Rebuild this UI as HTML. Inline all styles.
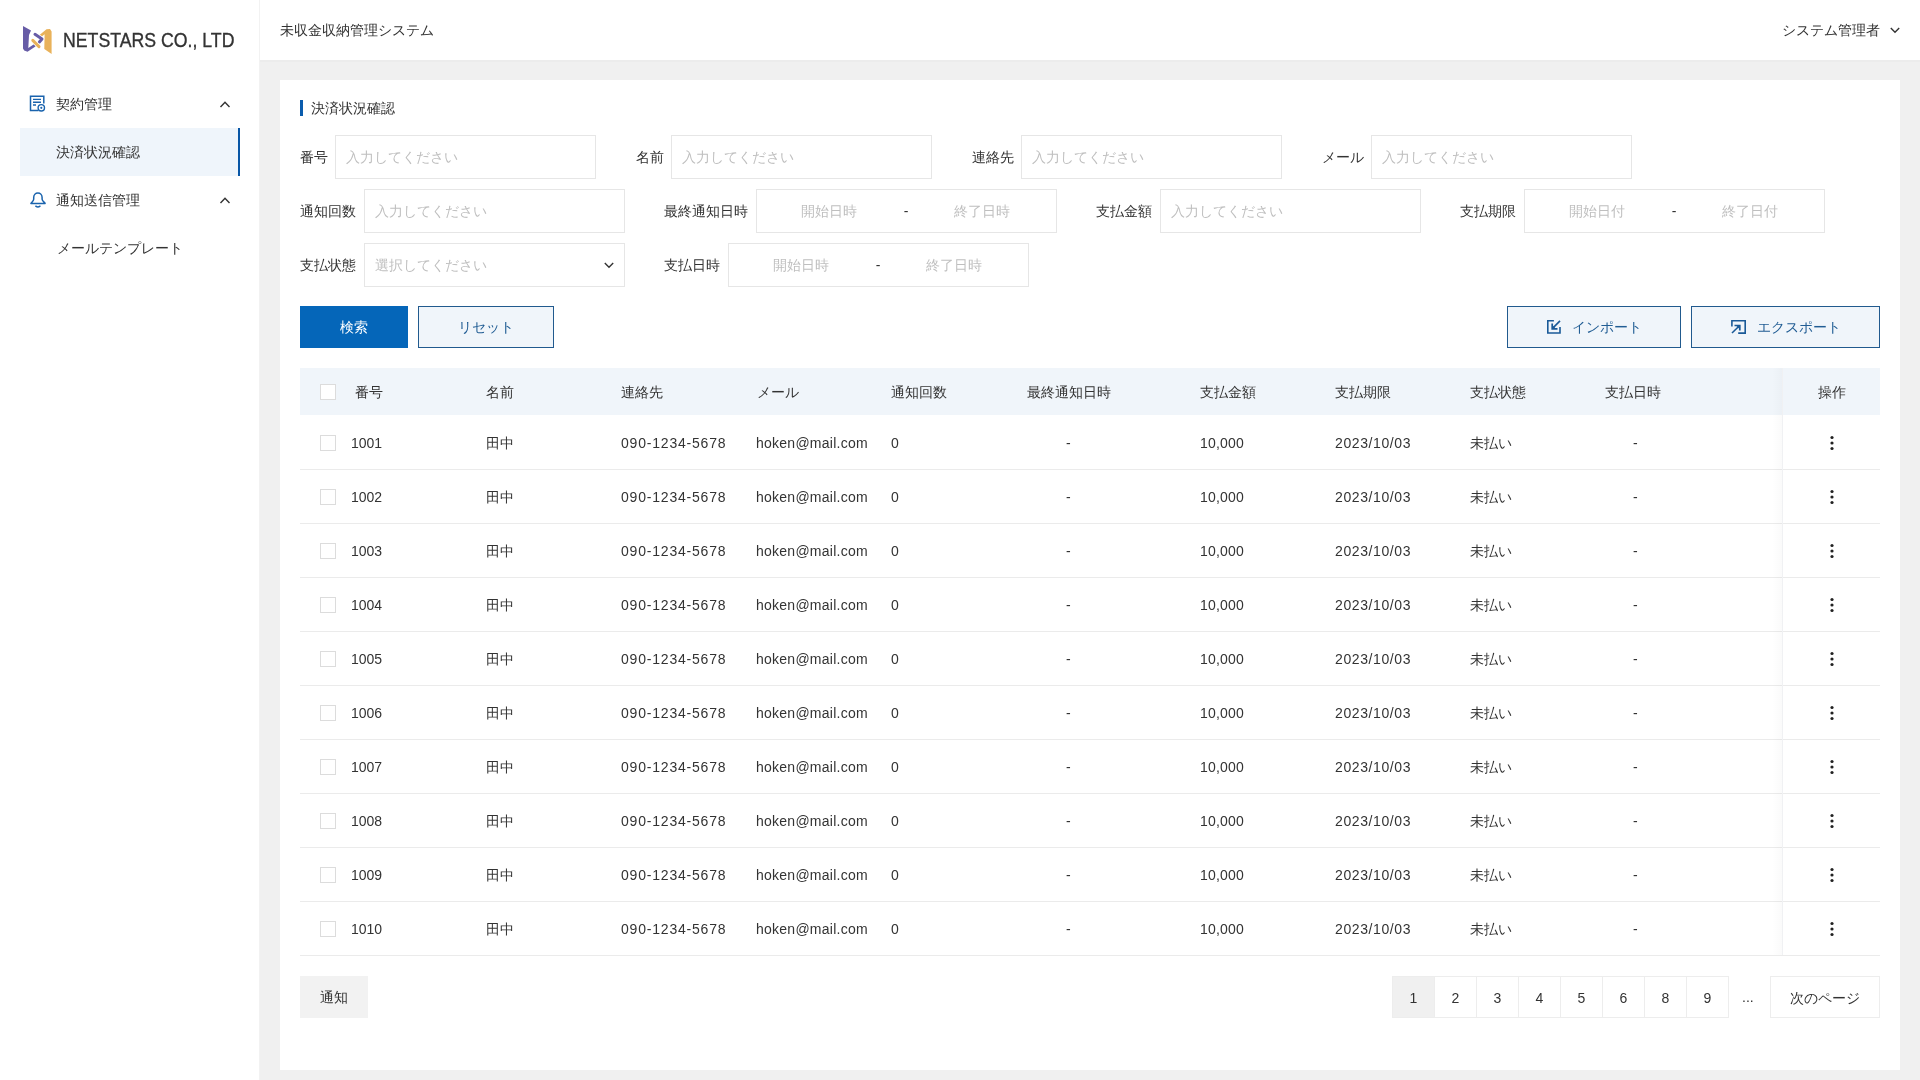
<!DOCTYPE html>
<html lang="ja"><head><meta charset="utf-8"><title>未収金収納管理システム</title>
<style>
html,body{margin:0;padding:0}
body{width:1920px;height:1080px;overflow:hidden;position:relative;background:#f0f0f0;font-family:"Liberation Sans",sans-serif;font-size:14px;color:#333333}
#wrap{position:absolute;left:0;top:0;width:1920px;height:1080px;will-change:transform}
.abs{position:absolute}
.t,.m,.ph{white-space:nowrap;line-height:20px;height:20px}
.ph{color:#bfbfbf}
.c{text-align:center}
#side{position:absolute;left:0;top:0;width:259px;height:1080px;background:#fff;border-right:1px solid #f2f2f2}
#head{position:absolute;left:260px;top:0;width:1660px;height:60px;background:#fff}
#card{position:absolute;left:280px;top:80px;width:1620px;height:990px;background:#fff}
.logo{font-size:20px;line-height:28px;color:#333;-webkit-text-stroke:0.35px #333;white-space:nowrap;transform-origin:0 0;transform:scaleX(0.885)}
.box{height:44px;box-sizing:border-box;border:1px solid #e6e6e6;background:#fff}
.btn{height:42px;line-height:42px;text-align:center;box-sizing:border-box;white-space:nowrap}
.pri{background:#0566b9;color:#fff}
.sec{background:#f0f5fa;border:1px solid #215a8e;color:#215d94;line-height:40px}
.gray{background:#f2f2f2;color:#333}
.cb{width:14px;height:14px;border:1px solid #dcdcdc;background:#fff}
.pg{width:42px;height:42px;line-height:42px;text-align:center;box-sizing:border-box;border:1px solid #ededed}
</style></head><body><div id="wrap">
<div id="side"></div>
<svg class="abs" style="left:20px;top:22px" width="36" height="36" viewBox="0 0 36 36">
<path d="M18.6 13.8 L26.5 7.3 L30 7 L31.6 9.6 L31.6 32 L24.3 27 L24.6 12.3 L20.6 15.6 Z" fill="#e9b25a"/>
<path d="M15 12.3 L22 17 L19.4 20" fill="none" stroke="#fff" stroke-width="4.6" stroke-linecap="round" stroke-linejoin="round"/>
<path d="M15 12.3 L22 17 L19.4 20" fill="none" stroke="#675ca6" stroke-width="3" stroke-linecap="round" stroke-linejoin="round"/>
<path d="M3 4 L11 8.5 L9 13 L8.3 26 L14.3 22 L15.8 24.3 L7.5 29.8 L4.2 28.6 L3 26.5 Z" fill="#675ca6"/>
<path d="M12.8 18.4 L19 24.6" fill="none" stroke="#fff" stroke-width="4.4" stroke-linecap="round"/>
<path d="M12.8 18.4 L19 24.6" fill="none" stroke="#e9b25a" stroke-width="3" stroke-linecap="round"/>
</svg>
<div class="abs logo" style="left:63px;top:26px">NETSTARS CO., LTD</div>
<svg class="abs" style="left:28px;top:94px" width="20" height="20" viewBox="0 0 20 20">
<path d="M10.5 16.5 H2.5 V2.2 H15.8 V9.5" fill="none" stroke="#1a63ad" stroke-width="1.5"/>
<path d="M5 5.4 H13 M5 8.2 H13 M5 11 H8" stroke="#1a63ad" stroke-width="1.4"/>
<circle cx="13.3" cy="13.8" r="3.2" fill="#fff" stroke="#1a63ad" stroke-width="1.4"/>
<circle cx="13.3" cy="13.8" r="1.1" fill="#1a63ad"/>
</svg>
<div class="abs m" style="left:56px;top:94px;">契約管理</div>
<svg class="abs" style="left:218px;top:99px" width="14" height="10" viewBox="0 0 14 10"><path d="M2.5 8 L7 3.2 L11.5 8" fill="none" stroke="#333" stroke-width="1.4"/></svg>
<div class="abs" style="left:20px;top:128px;width:218px;height:48px;background:#eff5fb;border-right:2px solid #0856a6"></div>
<div class="abs m" style="left:56px;top:142px;">決済状況確認</div>
<svg class="abs" style="left:28px;top:190px" width="20" height="20" viewBox="0 0 20 20">
<path d="M2.9 13.6 C2.9 12.6 5.7 11.3 5.7 9.3 V7.4 C5.7 4.8 7.6 3.1 9.9 3.1 C12.2 3.1 14.1 4.8 14.1 7.4 V9.3 C14.1 11.3 17.1 12.6 17.1 13.6 Z" fill="none" stroke="#1a63ad" stroke-width="1.5" stroke-linejoin="round"/>
<path d="M7.8 16.2 Q9.9 17.9 12 16.2" fill="none" stroke="#1a63ad" stroke-width="1.5" stroke-linecap="round"/>
</svg>
<div class="abs m" style="left:56px;top:190px;">通知送信管理</div>
<svg class="abs" style="left:218px;top:195px" width="14" height="10" viewBox="0 0 14 10"><path d="M2.5 8 L7 3.2 L11.5 8" fill="none" stroke="#333" stroke-width="1.4"/></svg>
<div class="abs m" style="left:57px;top:238px;">メールテンプレート</div>
<div id="head"></div>
<div class="abs" style="left:260px;top:60px;width:1660px;height:2px;background:#ececec"></div>
<div class="abs m" style="left:280px;top:20px;">未収金収納管理システム</div>
<div class="abs m" style="left:1782px;top:20px;">システム管理者</div>
<svg class="abs" style="left:1888px;top:23px" width="14" height="14" viewBox="0 0 14 14"><path d="M2.8 5 L7 9.2 L11.2 5" fill="none" stroke="#333" stroke-width="1.4"/></svg>
<div id="card"></div>
<div class="abs" style="left:300px;top:100px;width:3px;height:16px;background:#0a5cad"></div>
<div class="abs m" style="left:311px;top:98px;">決済状況確認</div>
<div class="abs m" style="left:300px;top:147px;">番号</div>
<div class="abs box" style="left:335px;top:135px;width:261px"></div>
<div class="abs ph" style="left:346px;top:147px;">入力してください</div>
<div class="abs m" style="left:636px;top:147px;">名前</div>
<div class="abs box" style="left:671px;top:135px;width:261px"></div>
<div class="abs ph" style="left:682px;top:147px;">入力してください</div>
<div class="abs m" style="left:972px;top:147px;">連絡先</div>
<div class="abs box" style="left:1021px;top:135px;width:261px"></div>
<div class="abs ph" style="left:1032px;top:147px;">入力してください</div>
<div class="abs m" style="left:1322px;top:147px;">メール</div>
<div class="abs box" style="left:1371px;top:135px;width:261px"></div>
<div class="abs ph" style="left:1382px;top:147px;">入力してください</div>
<div class="abs m" style="left:300px;top:201px;">通知回数</div>
<div class="abs box" style="left:364px;top:189px;width:261px"></div>
<div class="abs ph" style="left:375px;top:201px;">入力してください</div>
<div class="abs m" style="left:664px;top:201px;">最終通知日時</div>
<div class="abs box" style="left:756px;top:189px;width:301px"></div>
<div class="abs ph c" style="left:789px;top:201px;width:80px">開始日時</div>
<div class="abs m c" style="left:896px;top:201px;width:20px">-</div>
<div class="abs ph c" style="left:942px;top:201px;width:80px">終了日時</div>
<div class="abs m" style="left:1096px;top:201px;">支払金額</div>
<div class="abs box" style="left:1160px;top:189px;width:261px"></div>
<div class="abs ph" style="left:1171px;top:201px;">入力してください</div>
<div class="abs m" style="left:1460px;top:201px;">支払期限</div>
<div class="abs box" style="left:1524px;top:189px;width:301px"></div>
<div class="abs ph c" style="left:1557px;top:201px;width:80px">開始日付</div>
<div class="abs m c" style="left:1664px;top:201px;width:20px">-</div>
<div class="abs ph c" style="left:1710px;top:201px;width:80px">終了日付</div>
<div class="abs m" style="left:300px;top:255px;">支払状態</div>
<div class="abs box" style="left:364px;top:243px;width:261px"></div>
<div class="abs ph" style="left:375px;top:255px;">選択してください</div>
<svg class="abs" style="left:602px;top:258px" width="14" height="14" viewBox="0 0 14 14"><path d="M2.8 5 L7 9.2 L11.2 5" fill="none" stroke="#333" stroke-width="1.4"/></svg>
<div class="abs m" style="left:664px;top:255px;">支払日時</div>
<div class="abs box" style="left:728px;top:243px;width:301px"></div>
<div class="abs ph c" style="left:761px;top:255px;width:80px">開始日時</div>
<div class="abs m c" style="left:868px;top:255px;width:20px">-</div>
<div class="abs ph c" style="left:914px;top:255px;width:80px">終了日時</div>
<div class="abs btn pri" style="left:300px;top:306px;width:108px">検索</div>
<div class="abs btn sec" style="left:418px;top:306px;width:136px">リセット</div>
<div class="abs btn sec" style="left:1507px;top:306px;width:174px"></div>
<svg class="abs" style="left:1546px;top:318px" width="17" height="17" viewBox="0 0 17 17"><path d="M7.9 2.7 H1.8 V15 H14 V9" fill="none" stroke="#1a5a98" stroke-width="1.6"/><path d="M14 2.9 L7 9.9" stroke="#1a5a98" stroke-width="1.6"/><path d="M6.2 5.5 V10.8 H11.5" fill="none" stroke="#1a5a98" stroke-width="1.7"/><path d="M6.2 7 V10.8 H10 Z" fill="#1a5a98"/></svg>
<div class="abs m" style="left:1572px;top:317px;color:#215d94">インポート</div>
<div class="abs btn sec" style="left:1691px;top:306px;width:189px"></div>
<svg class="abs" style="left:1730px;top:318px" width="17" height="17" viewBox="0 0 17 17"><path d="M1.9 8.5 V2.8 H15.2 V15.1 H8.2" fill="none" stroke="#1a5a98" stroke-width="1.6"/><path d="M2 15 L9.2 8" stroke="#1a5a98" stroke-width="1.6"/><path d="M4.5 7.5 H9.8 V12.6" fill="none" stroke="#1a5a98" stroke-width="1.7"/><path d="M6 7.5 H9.8 V11.3 Z" fill="#1a5a98"/></svg>
<div class="abs m" style="left:1757px;top:317px;color:#215d94">エクスポート</div>
<div class="abs" style="left:300px;top:368px;width:1580px;height:47px;background:#f0f5fa"></div>
<div class="abs cb" style="left:320px;top:384px"></div>
<div class="abs m" style="left:355px;top:382px;">番号</div>
<div class="abs m" style="left:486px;top:382px;">名前</div>
<div class="abs m" style="left:621px;top:382px;">連絡先</div>
<div class="abs m" style="left:757px;top:382px;">メール</div>
<div class="abs m" style="left:891px;top:382px;">通知回数</div>
<div class="abs m" style="left:1027px;top:382px;">最終通知日時</div>
<div class="abs m" style="left:1200px;top:382px;">支払金額</div>
<div class="abs m" style="left:1335px;top:382px;">支払期限</div>
<div class="abs m" style="left:1470px;top:382px;">支払状態</div>
<div class="abs m" style="left:1605px;top:382px;">支払日時</div>
<div class="abs m" style="left:1818px;top:382px;">操作</div>
<div class="abs" style="left:300px;top:469px;width:1580px;height:1px;background:#ebebeb"></div>
<div class="abs cb" style="left:320px;top:435px"></div>
<div class="abs m" style="left:351px;top:433px;">1001</div>
<div class="abs m" style="left:486px;top:433px;">田中</div>
<div class="abs m" style="left:621px;top:433px;letter-spacing:0.8px">090-1234-5678</div>
<div class="abs m" style="left:756px;top:433px;letter-spacing:0.25px">hoken@mail.com</div>
<div class="abs m" style="left:891px;top:433px;">0</div>
<div class="abs m" style="left:1066px;top:433px;">-</div>
<div class="abs m" style="left:1200px;top:433px;letter-spacing:0.2px">10,000</div>
<div class="abs m" style="left:1335px;top:433px;letter-spacing:0.6px">2023/10/03</div>
<div class="abs m" style="left:1470px;top:433px;">未払い</div>
<div class="abs m" style="left:1633px;top:433px;">-</div>
<svg class="abs" style="left:1828px;top:435px" width="8" height="16" viewBox="0 0 8 16"><circle cx="4" cy="2.5" r="1.6" fill="#222"/><circle cx="4" cy="8" r="1.6" fill="#222"/><circle cx="4" cy="13.5" r="1.6" fill="#222"/></svg>
<div class="abs" style="left:300px;top:523px;width:1580px;height:1px;background:#ebebeb"></div>
<div class="abs cb" style="left:320px;top:489px"></div>
<div class="abs m" style="left:351px;top:487px;">1002</div>
<div class="abs m" style="left:486px;top:487px;">田中</div>
<div class="abs m" style="left:621px;top:487px;letter-spacing:0.8px">090-1234-5678</div>
<div class="abs m" style="left:756px;top:487px;letter-spacing:0.25px">hoken@mail.com</div>
<div class="abs m" style="left:891px;top:487px;">0</div>
<div class="abs m" style="left:1066px;top:487px;">-</div>
<div class="abs m" style="left:1200px;top:487px;letter-spacing:0.2px">10,000</div>
<div class="abs m" style="left:1335px;top:487px;letter-spacing:0.6px">2023/10/03</div>
<div class="abs m" style="left:1470px;top:487px;">未払い</div>
<div class="abs m" style="left:1633px;top:487px;">-</div>
<svg class="abs" style="left:1828px;top:489px" width="8" height="16" viewBox="0 0 8 16"><circle cx="4" cy="2.5" r="1.6" fill="#222"/><circle cx="4" cy="8" r="1.6" fill="#222"/><circle cx="4" cy="13.5" r="1.6" fill="#222"/></svg>
<div class="abs" style="left:300px;top:577px;width:1580px;height:1px;background:#ebebeb"></div>
<div class="abs cb" style="left:320px;top:543px"></div>
<div class="abs m" style="left:351px;top:541px;">1003</div>
<div class="abs m" style="left:486px;top:541px;">田中</div>
<div class="abs m" style="left:621px;top:541px;letter-spacing:0.8px">090-1234-5678</div>
<div class="abs m" style="left:756px;top:541px;letter-spacing:0.25px">hoken@mail.com</div>
<div class="abs m" style="left:891px;top:541px;">0</div>
<div class="abs m" style="left:1066px;top:541px;">-</div>
<div class="abs m" style="left:1200px;top:541px;letter-spacing:0.2px">10,000</div>
<div class="abs m" style="left:1335px;top:541px;letter-spacing:0.6px">2023/10/03</div>
<div class="abs m" style="left:1470px;top:541px;">未払い</div>
<div class="abs m" style="left:1633px;top:541px;">-</div>
<svg class="abs" style="left:1828px;top:543px" width="8" height="16" viewBox="0 0 8 16"><circle cx="4" cy="2.5" r="1.6" fill="#222"/><circle cx="4" cy="8" r="1.6" fill="#222"/><circle cx="4" cy="13.5" r="1.6" fill="#222"/></svg>
<div class="abs" style="left:300px;top:631px;width:1580px;height:1px;background:#ebebeb"></div>
<div class="abs cb" style="left:320px;top:597px"></div>
<div class="abs m" style="left:351px;top:595px;">1004</div>
<div class="abs m" style="left:486px;top:595px;">田中</div>
<div class="abs m" style="left:621px;top:595px;letter-spacing:0.8px">090-1234-5678</div>
<div class="abs m" style="left:756px;top:595px;letter-spacing:0.25px">hoken@mail.com</div>
<div class="abs m" style="left:891px;top:595px;">0</div>
<div class="abs m" style="left:1066px;top:595px;">-</div>
<div class="abs m" style="left:1200px;top:595px;letter-spacing:0.2px">10,000</div>
<div class="abs m" style="left:1335px;top:595px;letter-spacing:0.6px">2023/10/03</div>
<div class="abs m" style="left:1470px;top:595px;">未払い</div>
<div class="abs m" style="left:1633px;top:595px;">-</div>
<svg class="abs" style="left:1828px;top:597px" width="8" height="16" viewBox="0 0 8 16"><circle cx="4" cy="2.5" r="1.6" fill="#222"/><circle cx="4" cy="8" r="1.6" fill="#222"/><circle cx="4" cy="13.5" r="1.6" fill="#222"/></svg>
<div class="abs" style="left:300px;top:685px;width:1580px;height:1px;background:#ebebeb"></div>
<div class="abs cb" style="left:320px;top:651px"></div>
<div class="abs m" style="left:351px;top:649px;">1005</div>
<div class="abs m" style="left:486px;top:649px;">田中</div>
<div class="abs m" style="left:621px;top:649px;letter-spacing:0.8px">090-1234-5678</div>
<div class="abs m" style="left:756px;top:649px;letter-spacing:0.25px">hoken@mail.com</div>
<div class="abs m" style="left:891px;top:649px;">0</div>
<div class="abs m" style="left:1066px;top:649px;">-</div>
<div class="abs m" style="left:1200px;top:649px;letter-spacing:0.2px">10,000</div>
<div class="abs m" style="left:1335px;top:649px;letter-spacing:0.6px">2023/10/03</div>
<div class="abs m" style="left:1470px;top:649px;">未払い</div>
<div class="abs m" style="left:1633px;top:649px;">-</div>
<svg class="abs" style="left:1828px;top:651px" width="8" height="16" viewBox="0 0 8 16"><circle cx="4" cy="2.5" r="1.6" fill="#222"/><circle cx="4" cy="8" r="1.6" fill="#222"/><circle cx="4" cy="13.5" r="1.6" fill="#222"/></svg>
<div class="abs" style="left:300px;top:739px;width:1580px;height:1px;background:#ebebeb"></div>
<div class="abs cb" style="left:320px;top:705px"></div>
<div class="abs m" style="left:351px;top:703px;">1006</div>
<div class="abs m" style="left:486px;top:703px;">田中</div>
<div class="abs m" style="left:621px;top:703px;letter-spacing:0.8px">090-1234-5678</div>
<div class="abs m" style="left:756px;top:703px;letter-spacing:0.25px">hoken@mail.com</div>
<div class="abs m" style="left:891px;top:703px;">0</div>
<div class="abs m" style="left:1066px;top:703px;">-</div>
<div class="abs m" style="left:1200px;top:703px;letter-spacing:0.2px">10,000</div>
<div class="abs m" style="left:1335px;top:703px;letter-spacing:0.6px">2023/10/03</div>
<div class="abs m" style="left:1470px;top:703px;">未払い</div>
<div class="abs m" style="left:1633px;top:703px;">-</div>
<svg class="abs" style="left:1828px;top:705px" width="8" height="16" viewBox="0 0 8 16"><circle cx="4" cy="2.5" r="1.6" fill="#222"/><circle cx="4" cy="8" r="1.6" fill="#222"/><circle cx="4" cy="13.5" r="1.6" fill="#222"/></svg>
<div class="abs" style="left:300px;top:793px;width:1580px;height:1px;background:#ebebeb"></div>
<div class="abs cb" style="left:320px;top:759px"></div>
<div class="abs m" style="left:351px;top:757px;">1007</div>
<div class="abs m" style="left:486px;top:757px;">田中</div>
<div class="abs m" style="left:621px;top:757px;letter-spacing:0.8px">090-1234-5678</div>
<div class="abs m" style="left:756px;top:757px;letter-spacing:0.25px">hoken@mail.com</div>
<div class="abs m" style="left:891px;top:757px;">0</div>
<div class="abs m" style="left:1066px;top:757px;">-</div>
<div class="abs m" style="left:1200px;top:757px;letter-spacing:0.2px">10,000</div>
<div class="abs m" style="left:1335px;top:757px;letter-spacing:0.6px">2023/10/03</div>
<div class="abs m" style="left:1470px;top:757px;">未払い</div>
<div class="abs m" style="left:1633px;top:757px;">-</div>
<svg class="abs" style="left:1828px;top:759px" width="8" height="16" viewBox="0 0 8 16"><circle cx="4" cy="2.5" r="1.6" fill="#222"/><circle cx="4" cy="8" r="1.6" fill="#222"/><circle cx="4" cy="13.5" r="1.6" fill="#222"/></svg>
<div class="abs" style="left:300px;top:847px;width:1580px;height:1px;background:#ebebeb"></div>
<div class="abs cb" style="left:320px;top:813px"></div>
<div class="abs m" style="left:351px;top:811px;">1008</div>
<div class="abs m" style="left:486px;top:811px;">田中</div>
<div class="abs m" style="left:621px;top:811px;letter-spacing:0.8px">090-1234-5678</div>
<div class="abs m" style="left:756px;top:811px;letter-spacing:0.25px">hoken@mail.com</div>
<div class="abs m" style="left:891px;top:811px;">0</div>
<div class="abs m" style="left:1066px;top:811px;">-</div>
<div class="abs m" style="left:1200px;top:811px;letter-spacing:0.2px">10,000</div>
<div class="abs m" style="left:1335px;top:811px;letter-spacing:0.6px">2023/10/03</div>
<div class="abs m" style="left:1470px;top:811px;">未払い</div>
<div class="abs m" style="left:1633px;top:811px;">-</div>
<svg class="abs" style="left:1828px;top:813px" width="8" height="16" viewBox="0 0 8 16"><circle cx="4" cy="2.5" r="1.6" fill="#222"/><circle cx="4" cy="8" r="1.6" fill="#222"/><circle cx="4" cy="13.5" r="1.6" fill="#222"/></svg>
<div class="abs" style="left:300px;top:901px;width:1580px;height:1px;background:#ebebeb"></div>
<div class="abs cb" style="left:320px;top:867px"></div>
<div class="abs m" style="left:351px;top:865px;">1009</div>
<div class="abs m" style="left:486px;top:865px;">田中</div>
<div class="abs m" style="left:621px;top:865px;letter-spacing:0.8px">090-1234-5678</div>
<div class="abs m" style="left:756px;top:865px;letter-spacing:0.25px">hoken@mail.com</div>
<div class="abs m" style="left:891px;top:865px;">0</div>
<div class="abs m" style="left:1066px;top:865px;">-</div>
<div class="abs m" style="left:1200px;top:865px;letter-spacing:0.2px">10,000</div>
<div class="abs m" style="left:1335px;top:865px;letter-spacing:0.6px">2023/10/03</div>
<div class="abs m" style="left:1470px;top:865px;">未払い</div>
<div class="abs m" style="left:1633px;top:865px;">-</div>
<svg class="abs" style="left:1828px;top:867px" width="8" height="16" viewBox="0 0 8 16"><circle cx="4" cy="2.5" r="1.6" fill="#222"/><circle cx="4" cy="8" r="1.6" fill="#222"/><circle cx="4" cy="13.5" r="1.6" fill="#222"/></svg>
<div class="abs" style="left:300px;top:955px;width:1580px;height:1px;background:#ebebeb"></div>
<div class="abs cb" style="left:320px;top:921px"></div>
<div class="abs m" style="left:351px;top:919px;">1010</div>
<div class="abs m" style="left:486px;top:919px;">田中</div>
<div class="abs m" style="left:621px;top:919px;letter-spacing:0.8px">090-1234-5678</div>
<div class="abs m" style="left:756px;top:919px;letter-spacing:0.25px">hoken@mail.com</div>
<div class="abs m" style="left:891px;top:919px;">0</div>
<div class="abs m" style="left:1066px;top:919px;">-</div>
<div class="abs m" style="left:1200px;top:919px;letter-spacing:0.2px">10,000</div>
<div class="abs m" style="left:1335px;top:919px;letter-spacing:0.6px">2023/10/03</div>
<div class="abs m" style="left:1470px;top:919px;">未払い</div>
<div class="abs m" style="left:1633px;top:919px;">-</div>
<svg class="abs" style="left:1828px;top:921px" width="8" height="16" viewBox="0 0 8 16"><circle cx="4" cy="2.5" r="1.6" fill="#222"/><circle cx="4" cy="8" r="1.6" fill="#222"/><circle cx="4" cy="13.5" r="1.6" fill="#222"/></svg>
<div class="abs" style="left:1772px;top:368px;width:10px;height:587px;background:linear-gradient(to right,rgba(0,0,0,0),rgba(0,0,0,0.018))"></div>
<div class="abs" style="left:1782px;top:368px;width:1px;height:587px;background:#f0f1f3"></div>
<div class="abs btn gray" style="left:300px;top:976px;width:68px">通知</div>
<div class="abs pg" style="left:1392px;top:976px;width:43px;background:#f0f0f0">1</div>
<div class="abs pg" style="left:1434px;top:976px;width:43px;background:#fff">2</div>
<div class="abs pg" style="left:1476px;top:976px;width:43px;background:#fff">3</div>
<div class="abs pg" style="left:1518px;top:976px;width:43px;background:#fff">4</div>
<div class="abs pg" style="left:1560px;top:976px;width:43px;background:#fff">5</div>
<div class="abs pg" style="left:1602px;top:976px;width:43px;background:#fff">6</div>
<div class="abs pg" style="left:1644px;top:976px;width:43px;background:#fff">8</div>
<div class="abs pg" style="left:1686px;top:976px;width:43px;background:#fff">9</div>
<div class="abs m" style="left:1742px;top:987px;">...</div>
<div class="abs pg" style="left:1770px;top:976px;width:110px">次のページ</div>
</div></body></html>
